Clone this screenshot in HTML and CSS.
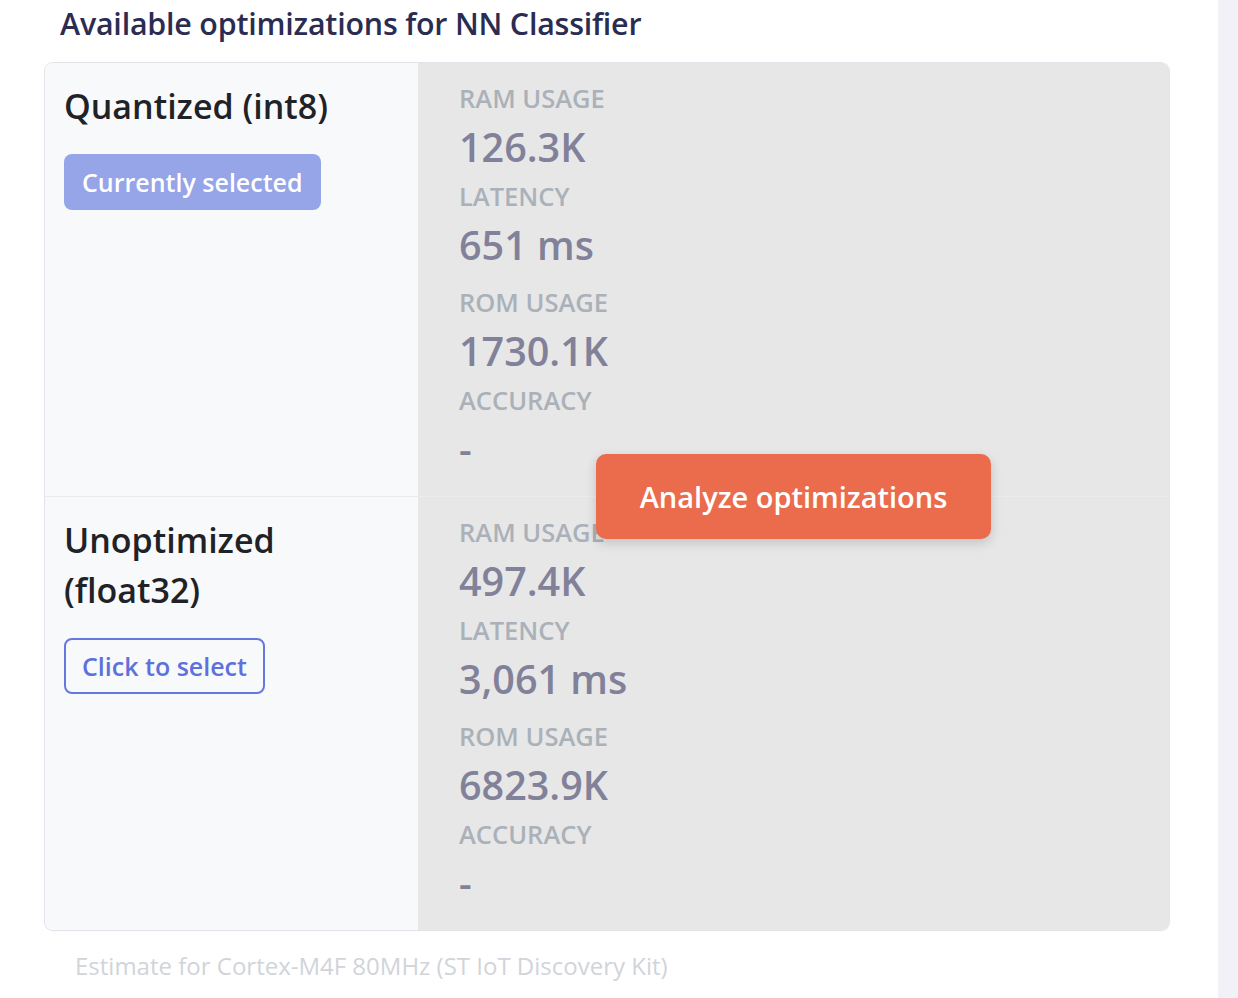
FILE: index.html
```html
<!DOCTYPE html>
<html>
<head>
<meta charset="utf-8">
<link rel="stylesheet" href="styles.css">
</head>
<body>
<div class="page">
  <main class="main">
    <h2 class="heading">Available optimizations for NN Classifier</h2>
    <div class="card">
      <div class="row">
        <div class="name-cell">
          <div class="name">Quantized (int8)</div>
          <button class="btn btn-selected">Currently selected</button>
        </div>
        <div class="metrics-cell">
          <div class="group">
            <div class="label">RAM USAGE</div>
            <div class="value">126.3K</div>
            <div class="label">LATENCY</div>
            <div class="value">651 ms</div>
          </div>
          <div class="group">
            <div class="label">ROM USAGE</div>
            <div class="value">1730.1K</div>
            <div class="label">ACCURACY</div>
            <div class="value">-</div>
          </div>
        </div>
      </div>
      <div class="row row-second">
        <div class="name-cell">
          <div class="name">Unoptimized (float32)</div>
          <button class="btn btn-select">Click to select</button>
        </div>
        <div class="metrics-cell">
          <div class="group">
            <div class="label">RAM USAGE</div>
            <div class="value">497.4K</div>
            <div class="label">LATENCY</div>
            <div class="value">3,061 ms</div>
          </div>
          <div class="group">
            <div class="label">ROM USAGE</div>
            <div class="value">6823.9K</div>
            <div class="label">ACCURACY</div>
            <div class="value">-</div>
          </div>
        </div>
      </div>
      <div class="overlay">
        <button class="btn-analyze">Analyze optimizations</button>
      </div>
    </div>
    <p class="footnote">Estimate for Cortex-M4F 80MHz (ST IoT Discovery Kit)</p>
  </main>
  <aside class="side-strip"></aside>
</div>
</body>
</html>
```

FILE: styles.css
```css
html, body {
  margin: 0;
  padding: 0;
  background: #ffffff;
  font-family: "Open Sans", "Noto Sans", sans-serif;
}

.page {
  display: flex;
  min-height: 998px;
}

.main {
  flex: 1;
  padding: 0 49px 0 45px;
}

.side-strip {
  width: 20px;
  background: #f1f1f7;
}

.heading {
  margin: 4px 0 0 15px;
  font-size: 30.4px;
  line-height: 40px;
  font-weight: 600;
  color: #2b2c52;
  letter-spacing: -0.2px;
}

.card {
  position: relative;
  margin-top: 19px;
  border-radius: 8px;
  overflow: hidden;
  box-shadow: 0 0 0 1px #e3e4ea, 0 1px 2px rgba(0, 0, 0, 0.06);
}

.row {
  display: flex;
}

.row-second {
  border-top: 1px solid #ebecef;
}

.name-cell {
  width: 373px;
  box-sizing: border-box;
  padding: 18px 20px 0 19px;
  background: #f8f9fb;
  display: flex;
  flex-direction: column;
  align-items: flex-start;
}

.name {
  font-size: 34px;
  line-height: 50px;
  font-weight: 600;
  color: #1f2226;
}

.btn {
  margin-top: 23px;
  font-family: inherit;
  font-size: 25px;
  font-weight: 600;
  border-radius: 8px;
  cursor: pointer;
}

.btn-selected {
  height: 56px;
  padding: 0 18px;
  background: #96a4e8;
  color: #ffffff;
  border: none;
}

.btn-select {
  height: 56px;
  padding: 0 16px;
  background: transparent;
  color: #5d71dc;
  border: 2px solid #6478dd;
}

.metrics-cell {
  flex: 1;
  background: #e7e7e7;
  padding: 15px 0 18px 41px;
}

.group + .group {
  margin-top: 8px;
}

.label {
  font-size: 25.5px;
  line-height: 40px;
  font-weight: 600;
  color: #aab1b9;
}

.value {
  font-size: 39.5px;
  line-height: 58px;
  font-weight: 600;
  color: #81819a;
}

.overlay {
  position: absolute;
  top: 0;
  bottom: 0;
  left: 373px;
  right: 0;
  display: flex;
  align-items: center;
  justify-content: center;
}

.btn-analyze {
  width: 395px;
  height: 85px;
  border: none;
  border-radius: 10px;
  background: #eb6b4d;
  color: #ffffff;
  font-family: inherit;
  font-size: 29px;
  font-weight: 600;
  box-shadow: 0 4px 12px rgba(0, 0, 0, 0.16);
  cursor: pointer;
}

.footnote {
  margin: 21px 0 0 30px;
  font-size: 24px;
  line-height: 30px;
  color: #d1d4d9;
}
```
